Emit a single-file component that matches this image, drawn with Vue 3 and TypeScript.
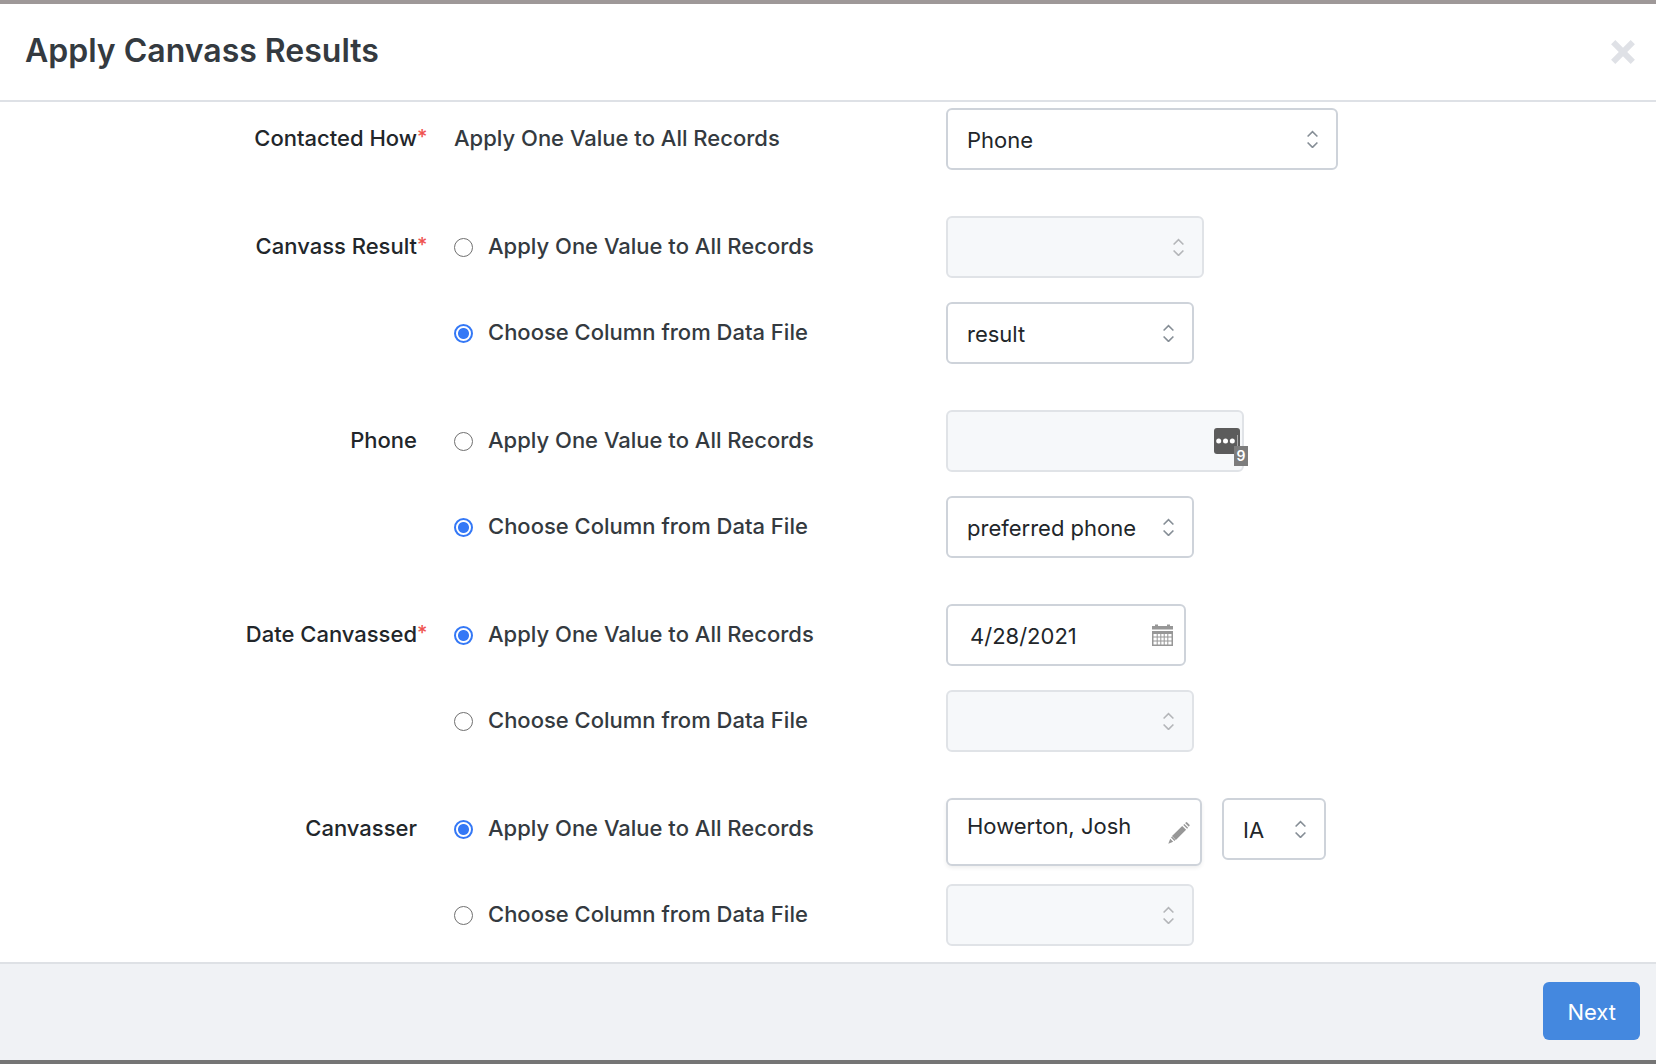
<script setup lang="ts">
import { ref } from 'vue'

type ControlKind = 'select' | 'text' | 'date' | 'person'

interface Option {
  text: string
  kind: ControlKind
  value: string
  size: string
}

interface Field {
  id: string
  label: string
  required: boolean
  options: Option[]
}

const ONE = 'Apply One Value to All Records'
const COLUMN = 'Choose Column from Data File'

const fields: Field[] = [
  {
    id: 'contacted', label: 'Contacted How', required: true,
    options: [{ text: ONE, kind: 'select', value: 'Phone', size: 'wide' }],
  },
  {
    id: 'result', label: 'Canvass Result', required: true,
    options: [
      { text: ONE, kind: 'select', value: '', size: 'medium' },
      { text: COLUMN, kind: 'select', value: 'result', size: 'column' },
    ],
  },
  {
    id: 'phone', label: 'Phone', required: false,
    options: [
      { text: ONE, kind: 'text', value: '', size: 'phone' },
      { text: COLUMN, kind: 'select', value: 'preferred phone', size: 'column' },
    ],
  },
  {
    id: 'date', label: 'Date Canvassed', required: true,
    options: [
      { text: ONE, kind: 'date', value: '4/28/2021', size: 'date' },
      { text: COLUMN, kind: 'select', value: '', size: 'column' },
    ],
  },
  {
    id: 'canvasser', label: 'Canvasser', required: false,
    options: [
      { text: ONE, kind: 'person', value: 'Howerton, Josh', size: 'person' },
      { text: COLUMN, kind: 'select', value: '', size: 'column' },
    ],
  },
]

const chosen = ref<Record<string, number>>({ contacted: 0, result: 1, phone: 1, date: 0, canvasser: 0 })
const isOff = (id: string, index: number): boolean => chosen.value[id] !== index
</script>

<template>
  <div class="page">
    <section class="dialog" role="dialog" aria-labelledby="dialog-title">
      <header class="head">
        <h1 id="dialog-title">Apply Canvass Results</h1>
        <button class="close" type="button" aria-label="Close">
          <svg width="26" height="26" viewBox="0 0 26 26"><path d="M3.2 3.2L22.8 22.8M22.8 3.2L3.2 22.8" fill="none" stroke="currentColor" stroke-width="6" /></svg>
        </button>
      </header>

      <form id="canvass" class="body" @submit.prevent>
        <div v-for="field in fields" :key="field.id" class="group" role="group" :aria-labelledby="field.id + '-label'">
          <div v-for="(option, i) in field.options" :key="i" class="row">
            <div class="name">
              <template v-if="i === 0">
                <span :id="field.id + '-label'">{{ field.label }}</span>
                <span class="mark">{{ field.required ? '*' : '' }}</span>
              </template>
            </div>

            <label v-if="field.options.length === 1" class="choice" :for="field.id + '-value-' + i">{{ option.text }}</label>
            <label v-else class="choice">
              <input v-model="chosen[field.id]" type="radio" :name="field.id" :value="i" />
              <span>{{ option.text }}</span>
            </label>

            <div class="controls">
              <div class="control" :class="option.size">
                <select v-if="option.kind === 'select'" :id="field.id + '-value-' + i" :aria-label="field.label + ': ' + option.text" :disabled="isOff(field.id, i)">
                  <option>{{ option.value }}</option>
                </select>
                <input v-else :id="field.id + '-value-' + i" type="text" :value="option.value" :aria-label="field.label + ': ' + option.text" :disabled="isOff(field.id, i)" />

                <svg v-if="option.kind === 'select'" class="arrows" :class="{ off: isOff(field.id, i) }" width="11" height="18" viewBox="0 0 11 18"><path d="M.6 6.5L5.5 1.6L10.4 6.5M.6 12.5L5.5 17.4L10.4 12.5" /></svg>

                <span v-if="option.kind === 'text'" class="filler">
                  <svg width="26" height="26" viewBox="0 0 26 26">
                    <rect width="26" height="26" rx="3" fill="#5c5c5c" />
                    <g fill="#fff"><circle cx="4.7" cy="13" r="2.5" /><circle cx="11.5" cy="13" r="2.5" /><circle cx="18.3" cy="13" r="2.5" /></g>
                    <path d="M23.5 7V18" stroke="#aaa" />
                  </svg>
                  <span class="count">9</span>
                </span>

                <button v-if="option.kind === 'date'" class="calendar" type="button" aria-label="Open calendar">
                  <svg width="21" height="22" viewBox="0 0 21 22">
                    <path fill="#979797" fill-rule="evenodd" d="M0 2H3V.5H6V2H15V.5H18V2H21V5.5H0ZM0 7H21V22H0ZM1.5 10V12.5H4.7V10ZM5.7 10V12.5H8.3V10ZM9.3 10V12.5H11.7V10ZM12.7 10V12.5H15.3V10ZM16.3 10V12.5H19.5V10ZM1.5 13.5V16.5H4.7V13.5ZM5.7 13.5V16.5H8.3V13.5ZM9.3 13.5V16.5H11.7V13.5ZM12.7 13.5V16.5H15.3V13.5ZM16.3 13.5V16.5H19.5V13.5ZM1.5 17.5V20.5H4.7V17.5ZM5.7 17.5V20.5H8.3V17.5ZM9.3 17.5V20.5H11.7V17.5ZM12.7 17.5V20.5H15.3V17.5ZM16.3 17.5V20.5H19.5V17.5Z" />
                  </svg>
                </button>

                <button v-if="option.kind === 'person'" class="pencil" type="button" aria-label="Edit canvasser">
                  <svg width="22" height="22" viewBox="0 0 22 22">
                    <path fill="#979797" d="M.3 21.7L2.2 16.8L5.2 19.8ZM3 15.6L4 14.6L7.4 18L6.4 19ZM4 14L14.2 3.9L18.1 7.8L7.9 17.9ZM15.3 2.9L16.3 1.9L20.1 5.7L19.1 6.7ZM17.1 1.1L18.2.3Q18.7-.1 19.2.4L21.5 2.7Q22 3.2 21.5 3.8L20.8 4.8Z" />
                  </svg>
                </button>
              </div>

              <div v-if="option.kind === 'person'" class="control state">
                <select aria-label="State"><option>IA</option></select>
                <svg class="arrows" width="11" height="18" viewBox="0 0 11 18"><path d="M.6 6.5L5.5 1.6L10.4 6.5M.6 12.5L5.5 17.4L10.4 12.5" /></svg>
              </div>
            </div>
          </div>
        </div>
      </form>

      <footer class="foot">
        <button class="next" type="submit" form="canvass">Next</button>
      </footer>
    </section>
  </div>
</template>

<style>
body {
  background: #757575;
}
</style>

<style scoped>
.page,
.page * {
  box-sizing: border-box;
}

.page {
  display: flex;
  min-height: 100vh;
  padding-bottom: 4px;
  border-top: 4px solid #9e9898;
  font: 22px/28px Inter, "Liberation Sans", sans-serif;
  color: #22262a;
}

.dialog {
  display: flex;
  flex: 1;
  flex-direction: column;
  background: #fff;
}

.head {
  display: flex;
  align-items: center;
  justify-content: space-between;
  padding: 25px 20px 27px 25px;
  border-bottom: 2px solid #dee1e6;
}

h1 {
  margin: 0;
  font-size: 32px;
  font-weight: 600;
  line-height: 44px;
  color: #343a40;
}

button {
  display: flex;
  padding: 0;
  border: 0;
  background: none;
  font: inherit;
  cursor: pointer;
}

.close {
  padding-top: 2px;
  color: #dfe1e6;
}

.body {
  display: flex;
  flex: 1;
  flex-direction: column;
  gap: 46px;
  padding: 6px 0 16px;
}

.group {
  display: flex;
  flex-direction: column;
  gap: 24px;
}

.row {
  display: grid;
  grid-template: 62px / 427fr 519fr 710fr;
}

.name,
.choice {
  display: flex;
  align-items: center;
  padding-bottom: 2px;
  font-weight: 500;
}

.name {
  justify-content: flex-end;
}

.mark {
  width: 10px;
  padding-bottom: 2px;
  font-size: 20px;
  color: #ef5350;
}

.choice {
  gap: 15px;
  padding-left: 27px;
  color: #343a40;
}

.choice input {
  width: 19px;
  height: 19px;
  margin: 2px 0 0;
  border: 1px solid #707070;
  border-radius: 50%;
  appearance: none;
  background: #fff;
}

.choice input:checked {
  border: 2px solid #3478f6;
  background: radial-gradient(circle, #3478f6 5px, #fff 6px);
}

.controls {
  display: flex;
  align-items: flex-start;
  gap: 20px;
}

.control {
  position: relative;
}

.control select,
.control > input {
  display: block;
  width: 100%;
  height: 62px;
  margin: 0;
  padding: 2px 40px 0 19px;
  border: 2px solid #ced3da;
  border-radius: 6px;
  appearance: none;
  background: #fff;
  font: inherit;
  color: inherit;
}

.control select:disabled,
.control > input:disabled {
  border-color: #e0e3e7;
  background: #f6f8fa;
  opacity: 1;
}

.wide { width: 392px; }
.medium { width: 258px; }
.column { width: 248px; }
.phone { width: 298px; }
.date { width: 240px; }
.person { width: 256px; }
.state { width: 104px; }

.date > input {
  padding-left: 22px;
}

.person > input {
  height: 68px;
  padding-bottom: 14px;
  box-shadow: 0 2px 4px #00000012;
}

.arrows {
  position: absolute;
  top: 22px;
  right: 20px;
  fill: none;
  stroke: #868e96;
  stroke-width: 1.6;
  pointer-events: none;
}

.arrows.off {
  stroke: #b4b6b9;
}

.filler {
  position: absolute;
  top: 18px;
  right: 4px;
  display: flex;
}

.count {
  position: absolute;
  top: 18px;
  left: 20px;
  width: 14px;
  background: #7c7c7c;
  font-size: 14px;
  font-weight: 600;
  line-height: 20px;
  text-align: center;
  color: #fff;
}

.calendar {
  position: absolute;
  top: 20px;
  right: 13px;
}

.pencil {
  position: absolute;
  top: 24px;
  right: 12px;
}

.foot {
  display: flex;
  justify-content: flex-end;
  padding: 18px 16px 20px;
  border-top: 2px solid #dee1e5;
  background: #f0f2f5;
}

.next {
  padding: 16px 24px 14px;
  border-radius: 6px;
  background: #4488df;
  color: #fff;
}
</style>
